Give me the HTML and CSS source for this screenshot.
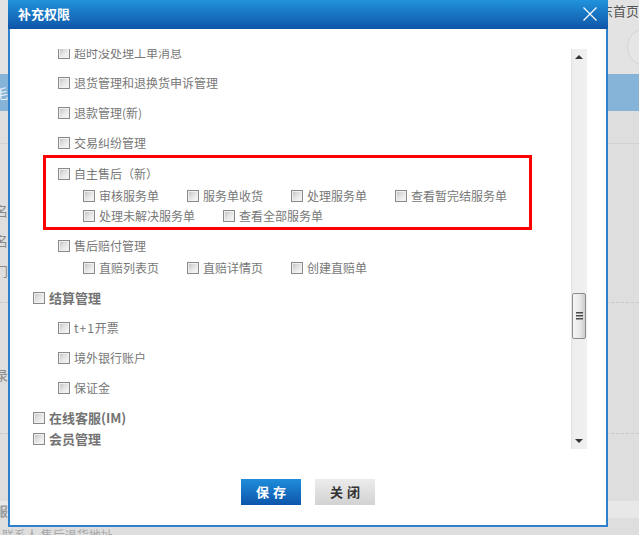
FILE: index.html
```html
<!DOCTYPE html>
<html lang="zh-CN">
<head>
<meta charset="utf-8">
<title>补充权限</title>
<link rel="stylesheet" href="styles.css">
</head>
<body>
<div class="page">
  <header class="page-head">
    <div class="head-links">京东首页</div>
    <div class="head-user"><span class="avatar"><span class="avatar-in"></span></span></div>
  </header>
  <nav class="page-nav"><span class="frag frag-nav">毛</span></nav>
  <div class="bg-sec bg-sec1"></div>
  <div class="bg-sec bg-sec2">
    <span class="frag">名</span>
    <span class="frag">名</span>
    <span class="frag">门</span>
  </div>
  <div class="bg-sec bg-sec3"><span class="frag">录</span></div>
  <div class="bg-sec bg-sec4"></div>
  <div class="bg-band"><span class="frag frag-bold">服</span></div>
  <div class="bg-foot">联系人 售后退货地址</div>

  <div class="modal">
    <div class="modal-title">
      <span class="modal-title-text">补充权限</span>
      <svg class="modal-close" width="14" height="14" viewBox="0 0 14 14"><path d="M0.5 0.5 L13.5 13.5 M13.5 0.5 L0.5 13.5" stroke="#fff" stroke-width="1.2" fill="none"/></svg>
    </div>
    <div class="modal-main">
      <div class="scroll-area">
        <div class="viewport">
          <div class="perm-list">
            <div class="row lv2 gap"><span class="cb"></span>超时没处理工单消息</div>
            <div class="row lv2 gap"><span class="cb"></span>退货管理和退换货申诉管理</div>
            <div class="row lv2 gap"><span class="cb"></span>退款管理(新)</div>
            <div class="row lv2 gap"><span class="cb"></span>交易纠纷管理</div>
            <div class="highlight">
              <div class="row"><span class="cb"></span>自主售后（新）</div>
              <div class="subs">
                <div class="sub"><span class="cb"></span>审核服务单</div>
                <div class="sub"><span class="cb"></span>服务单收货</div>
                <div class="sub"><span class="cb"></span>处理服务单</div>
                <div class="sub"><span class="cb"></span>查看暂完结服务单</div>
                <div class="sub"><span class="cb"></span>处理未解决服务单</div>
                <div class="sub"><span class="cb"></span>查看全部服务单</div>
              </div>
            </div>
            <div class="group lv2 gap">
              <div class="row"><span class="cb"></span>售后赔付管理</div>
              <div class="subs">
                <div class="sub"><span class="cb"></span>直赔列表页</div>
                <div class="sub"><span class="cb"></span>直赔详情页</div>
                <div class="sub"><span class="cb"></span>创建直赔单</div>
              </div>
            </div>
            <div class="row lv1 gap"><span class="cb"></span>结算管理</div>
            <div class="row lv2 gap"><span class="cb"></span><span class="latin">t+1</span>开票</div>
            <div class="row lv2 gap"><span class="cb"></span>境外银行账户</div>
            <div class="row lv2 gap"><span class="cb"></span>保证金</div>
            <div class="row lv1 last-gap"><span class="cb"></span>在线客服(IM)</div>
            <div class="row lv1 gap"><span class="cb"></span>会员管理</div>
            <div class="row lv2 gap"><span class="cb"></span>会员信息</div>
          </div>
        </div>
        <div class="scrollbar">
          <div class="sb-btn"><span class="arrow-up"></span></div>
          <div class="thumb"><span class="grip"></span></div>
          <div class="sb-space"></div>
          <div class="sb-btn"><span class="arrow-down"></span></div>
        </div>
      </div>
      <div class="actions">
        <button class="btn btn-primary">保存</button>
        <button class="btn btn-default">关闭</button>
      </div>
    </div>
  </div>
</div>
</body>
</html>
```
FILE: styles.css
```css
* { box-sizing: border-box; }
html, body { margin: 0; padding: 0; }
body {
  font-family: "Noto Sans CJK SC", "Liberation Sans", sans-serif;
  background: #dedede;
}
.page {
  position: relative;
  width: 639px;
  height: 535px;
  overflow: hidden;
  background: #dedede;
}

/* background page */
.page-head {
  height: 74px;
  background: #e3e3e3;
  display: flex;
  flex-direction: column;
  align-items: flex-end;
}
.head-links {
  font-size: 13px;
  line-height: 14px;
  color: #555;
  padding-top: 4px;
  margin-right: 0;
  white-space: nowrap;
}
.head-user {
  display: flex;
  margin-top: 10px;
  margin-right: -26px;
}
.avatar {
  width: 38px;
  height: 38px;
  border-radius: 50%;
  border: 1px solid #d4d4d4;
  background: #e6e6e6;
  display: flex;
  align-items: center;
  justify-content: center;
}
.avatar-in {
  width: 26px;
  height: 26px;
  border-radius: 50%;
  background: #7fb5df;
  margin-left: 12px;
}
.page-nav {
  height: 37px;
  background: #86b4d9;
  padding-top: 12px;
}
.frag {
  display: flex;
  justify-content: flex-end;
  width: 8px;
  overflow: hidden;
  white-space: nowrap;
  font-size: 13px;
  line-height: 14px;
  color: #8a8a8a;
}
.frag-nav { color: #e8f0f8; }
.frag-bold { font-weight: bold; color: #999; }
.bg-sec1 { height: 33px; border-bottom: 1px solid #d2d2d2; }
.bg-sec2 {
  height: 159px;
  padding-top: 60px;
  border-bottom: 1px dashed #c8c8c8;
  display: flex;
  flex-direction: column;
  gap: 16px;
}
.bg-sec3 {
  height: 131px;
  padding-top: 65px;
  border-bottom: 1px dashed #c8c8c8;
}
.bg-sec4 { height: 67px; }
.bg-band { height: 17px; background: #e8e8e8; padding-top: 3px; }
.bg-foot {
  padding-top: 10px;
  padding-left: 2px;
  font-size: 12px;
  line-height: 14px;
  color: #a8a8a8;
  white-space: nowrap;
}

/* modal */
.modal {
  position: absolute;
  top: 0;
  left: 8px;
  width: 600px;
  height: 527px;
  display: flex;
  flex-direction: column;
  background: #fff;
}
.modal-title {
  height: 29px;
  flex: none;
  display: flex;
  align-items: center;
  justify-content: space-between;
  padding: 0 11px 1px 10px;
  background: linear-gradient(to bottom, #2193dc, #0f55a8);
}
.modal-title-text {
  color: #fff;
  font-size: 13px;
  font-weight: bold;
  line-height: 26px;
}
.modal-close { display: block; }
.modal-main {
  flex: 1;
  border: 2px solid #2e80cc;
  border-top: 0;
  padding: 20px 19px 0 23px;
  display: flex;
  flex-direction: column;
}
.scroll-area {
  display: flex;
  height: 400px;
  flex: none;
}
.viewport {
  flex: 1;
  overflow: hidden;
}
.perm-list {
  display: flex;
  flex-direction: column;
  margin-top: -6.5px;
  font-size: 12px;
  color: #777;
}
.row {
  display: flex;
  align-items: center;
  height: 20px;
  line-height: 18px;
  white-space: nowrap;
}
.lv1 { font-size: 13px; font-weight: bold; color: #737373; }
.lv2 { padding-left: 25px; }
.group.lv2 { display: flex; flex-direction: column; }
.gap { margin-bottom: 10px; }
.last-gap { margin-bottom: 0.5px; }
.latin { letter-spacing: 1px; }
.cb {
  flex: none;
  width: 12px;
  height: 12px;
  margin-right: 4px;
  border: 1px solid #8a8a8a;
  background: linear-gradient(135deg, #bdbdbd 0%, #e2e2e2 45%, #fbfbfb 100%);
  box-shadow: inset 0 0 0 1px #efefef;
}
.highlight {
  align-self: flex-start;
  width: 489px;
  margin: -7.5px 0 6px 10px;
  border: 3px solid #ff0000;
  padding: 6px 0 0.5px 12px;
}
.subs {
  display: flex;
  flex-wrap: wrap;
  column-gap: 28px;
  padding-left: 25px;
  padding-top: 1.5px;
}
.sub {
  display: flex;
  align-items: center;
  height: 20.5px;
  line-height: 18px;
  white-space: nowrap;
}

/* scrollbar */
.scrollbar {
  width: 16px;
  flex: none;
  display: flex;
  flex-direction: column;
  align-items: center;
  background: linear-gradient(to right, #e2e2e2 0, #eeeeee 2px, #f0f0f0 100%);
}
.sb-btn {
  width: 16px;
  height: 16px;
  flex: none;
  display: flex;
  align-items: center;
  justify-content: center;
}
.arrow-up {
  width: 0;
  height: 0;
  border-left: 4px solid transparent;
  border-right: 4px solid transparent;
  border-bottom: 4px solid #333;
}
.arrow-down {
  width: 0;
  height: 0;
  border-left: 4px solid transparent;
  border-right: 4px solid transparent;
  border-top: 4px solid #333;
}
.thumb {
  margin-top: 228px;
  width: 14px;
  height: 46px;
  flex: none;
  border: 1px solid #8e8e8e;
  border-radius: 2px;
  background: linear-gradient(to right, #f6f6f6 0%, #e8e8e8 55%, #cdcdcd 100%);
  display: flex;
  align-items: center;
  justify-content: center;
}
.grip {
  width: 7px;
  height: 8px;
  background: repeating-linear-gradient(to bottom, #4a4a4a 0 1px, #9a9a9a 1px 2px, transparent 2px 3px);
}
.sb-space { flex: 1; }

/* buttons */
.actions {
  display: flex;
  justify-content: center;
  gap: 14px;
  margin: 30px -19px 0 -23px;
}
.btn {
  width: 60px;
  height: 26px;
  border: 0;
  padding: 0 0 0 4px;
  font-family: "Noto Sans CJK SC", sans-serif;
  font-size: 13px;
  font-weight: bold;
  letter-spacing: 4px;
  line-height: 26px;
}
.btn-primary {
  color: #fff;
  background: linear-gradient(to bottom, #1f8ddb, #0d55aa);
}
.btn-default {
  color: #333;
  background: linear-gradient(to bottom, #ececec, #d2d2d2);
}
```
